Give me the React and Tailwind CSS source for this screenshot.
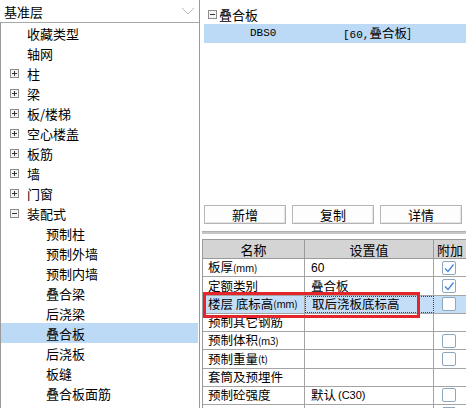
import React from 'react';

const cjk = "font-['SimSun','Noto_Sans_CJK_SC',sans-serif]";

const treeItems = [
  { label: '收藏类型', level: 0 },
  { label: '轴网', level: 0 },
  { label: '柱', level: 0, icon: '+' },
  { label: '梁', level: 0, icon: '+' },
  { label: '板/楼梯', level: 0, icon: '+' },
  { label: '空心楼盖', level: 0, icon: '+' },
  { label: '板筋', level: 0, icon: '+' },
  { label: '墙', level: 0, icon: '+' },
  { label: '门窗', level: 0, icon: '+' },
  { label: '装配式', level: 0, icon: '-' },
  { label: '预制柱', level: 1 },
  { label: '预制外墙', level: 1 },
  { label: '预制内墙', level: 1 },
  { label: '叠合梁', level: 1 },
  { label: '后浇梁', level: 1 },
  { label: '叠合板', level: 1, selected: true },
  { label: '后浇板', level: 1 },
  { label: '板缝', level: 1 },
  { label: '叠合板面筋', level: 1 },
];

const props = [
  { name: '板厚', unit: '(mm)', value: '60', check: 'on' },
  { name: '定额类别', value: '叠合板', check: 'on' },
  { name: '楼层 底标高', unit: '(mm)', value: '取后浇板底标高', check: 'off', selected: true },
  { name: '预制其它钢筋', value: '' },
  { name: '预制体积', unit: '(m3)', value: '', check: 'off' },
  { name: '预制重量', unit: '(t)', value: '', check: 'off' },
  { name: '套筒及预埋件', value: '' },
  { name: '预制砼强度', value: '默认', valueUnit: '(C30)', check: 'off' },
  { name: '', value: '', check: 'off' },
];

const Expander = ({ type }) => (
  <span className="w-[9px] h-[9px] border border-[#8c8c8c] bg-[#f4f4f4] flex items-center justify-center">
    <svg width="7" height="7" viewBox="0 0 7 7">
      <line x1="1" y1="3.5" x2="6" y2="3.5" stroke="#333" strokeWidth="1" />
      {type === '+' && <line x1="3.5" y1="1" x2="3.5" y2="6" stroke="#333" strokeWidth="1" />}
    </svg>
  </span>
);

const CheckBox = ({ on }) => (
  <span className="w-[14px] h-[14px] border border-[#8fa6bf] rounded-[2px] bg-white flex items-center justify-center">
    {on && (
      <svg width="12" height="12" viewBox="0 0 12 12">
        <path d="M2 6.5 L5 9.5 L10.5 2.5" fill="none" stroke="#3f86d8" strokeWidth="1.3" />
      </svg>
    )}
  </span>
);

const App = () => {
  return (
    <div className={`w-[466px] h-[408px] overflow-hidden bg-white flex text-black text-[13px] leading-none ${cjk}`}>
      {/* Left tree */}
      <div className="w-[200px] h-full flex flex-col border-r border-[#9a9a9a] shrink-0">
        <div className="h-[23px] shrink-0 border-b border-[#a8a8a8] flex items-center justify-between pl-[4px] pr-[4px]">
          <span>基准层</span>
          <svg width="14" height="8" viewBox="0 0 14 8">
            <path d="M1 1 L7 7 L13 1" fill="none" stroke="#b8b8b8" strokeWidth="1" />
          </svg>
        </div>
        <div className="flex-1 border-l border-[#9a9a9a] flex flex-col">
          {treeItems.map((it) => (
            <div
              key={it.label}
              className={`h-[20px] shrink-0 flex items-center mr-[1px] ${it.selected ? 'bg-[#bcd9f6]' : ''}`}
            >
              {it.level === 0 ? (
                <>
                  <span className="w-[26px] pl-[9px] shrink-0 flex items-center">
                    {it.icon && <Expander type={it.icon} />}
                  </span>
                  <span>{it.label}</span>
                </>
              ) : (
                <span className="pl-[45px]">{it.label}</span>
              )}
            </div>
          ))}
        </div>
      </div>

      {/* Right panel */}
      <div className="flex-1 h-full flex flex-col relative">
        <div className="h-[201px] shrink-0 flex flex-col">
          <div className="h-[24px] pt-[4px] flex items-center pl-[8px] gap-[2px]">
            <Expander type="-" />
            <span>叠合板</span>
          </div>
          <div className="h-[19px] ml-[4px] bg-[#bcd9f6] flex items-center">
            <span className="pl-[46px] w-[139px] font-['Liberation_Mono',monospace] text-[11px]">DBS0</span>
            <span className="text-[12.5px]">
              <span className="font-['Liberation_Mono',monospace] text-[11px]">[60,</span>叠合板]
            </span>
          </div>
        </div>

        {/* Buttons */}
        <div className="flex pl-[4px] gap-[6px] mt-[4px]">
          {['新增', '复制', '详情'].map((b) => (
            <div
              key={b}
              className="w-[82px] h-[19px] border border-[#b4b4b4] bg-[#fdfdfd] shadow-[inset_1px_1px_0_#ffffff,inset_-1px_-1px_0_#e4e4e4] flex items-center justify-center"
            >
              {b}
            </div>
          ))}
        </div>

        {/* Separator */}
        <div className="ml-[2px] mt-[7px] h-[3px] bg-[#c6c6c6] border-t border-[#b0b0b0] shrink-0" />

        {/* Property table */}
        <div className="ml-[2px] mt-[5px] border-l border-[#9a9a9a] flex flex-col">
          <div className="h-[20px] shrink-0 flex bg-[#d4d4d4] border-y border-[#9a9a9a]">
            <div className="w-[102px] border-r border-[#9a9a9a] flex items-center justify-center">名称</div>
            <div className="w-[129px] border-r border-[#9a9a9a] flex items-center justify-center">设置值</div>
            <div className="flex-1 flex items-center justify-center">附加</div>
          </div>
          {props.map((p, i) => (
            <div
              key={i}
              className={`h-[18.25px] shrink-0 flex border-b border-[#a4a4a4] ${p.selected ? 'bg-[#c4def8]' : ''}`}
            >
              <div className="w-[102px] border-r border-[#a4a4a4] flex items-center pl-[5px] whitespace-nowrap text-[12.5px]">
                {p.name}
                {p.unit && <span className="text-[10px] tracking-[-0.3px]">{p.unit}</span>}
              </div>
              <div
                className={`w-[129px] flex items-center pl-[6px] whitespace-nowrap text-[12.5px] ${
                  p.selected ? 'border border-dotted border-[#404040]' : 'border-r border-[#a4a4a4]'
                }`}
              >
                {p.value === '60' ? (
                  <span className="font-['Liberation_Sans',sans-serif] text-[12px]">60</span>
                ) : (
                  p.value
                )}
                {p.valueUnit && (
                  <span className="text-[11px] ml-[2px] font-['Liberation_Sans',sans-serif]">{p.valueUnit}</span>
                )}
              </div>
              <div className="flex-1 flex items-center justify-center pr-[2px]">
                {p.check && <CheckBox on={p.check === 'on'} />}
              </div>
            </div>
          ))}
        </div>

        {/* Red annotation box */}
        <div className="absolute left-[3px] top-[292px] w-[217px] h-[26px] border-[3px] border-[#e3262b] pointer-events-none" />
      </div>
    </div>
  );
};

export default App;
